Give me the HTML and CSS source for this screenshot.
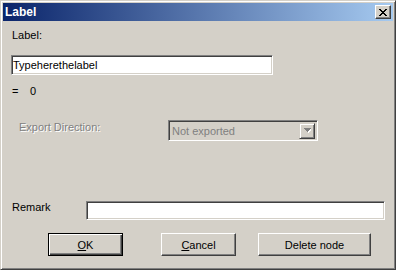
FILE: index.html
```html
<!DOCTYPE html>
<html lang="en">
<head>
    <meta charset="UTF-8">
    <title>Label</title>
    <link rel="stylesheet" href="styles.css">
</head>
<body>

    <div class="window">
        <!-- Title bar -->
        <div class="titlebar">
            <span class="title">Label</span>
            <span class="close-btn">
                <svg width="8" height="7" viewBox="0 0 8 7" shape-rendering="crispEdges">
                    <path fill="#000" d="M0 0h2v1h-2z M6 0h2v1h-2z M1 1h2v1h-2z M5 1h2v1h-2z M2 2h4v1h-4z M3 3h2v1h-2z M2 4h4v1h-4z M1 5h2v1h-2z M5 5h2v1h-2z M0 6h2v1h-2z M6 6h2v1h-2z"/>
                </svg>
            </span>
        </div>

        <div class="content">
            <div class="field-label">Label:</div>
            <input class="text-box label-box" type="text" value="Typeherethelabel">

            <div class="value-row">
                <span class="eq">=</span>
                <span>0</span>
            </div>

            <div class="export-row">
                <span class="disabled-text">Export Direction:</span>
                <div class="combo">
                    <span class="combo-text">Not exported</span>
                    <span class="combo-btn">
                        <svg width="7" height="5" viewBox="0 0 7 5" shape-rendering="crispEdges">
                            <path fill="#fff" d="M1 1h7v1h-1v1h-1v1h-1v1h-1v-1h-1v-1h-1v-1h-1z"/>
                            <path fill="#808080" d="M0 0h7v1h-1v1h-1v1h-1v1h-1v-1h-1v-1h-1v-1h-1z"/>
                        </svg>
                    </span>
                </div>
            </div>

            <div class="remark-row">
                <span class="remark-label">Remark</span>
                <input class="text-box remark-box" type="text" value="">
            </div>

            <div class="buttons">
                <button class="btn btn-default"><u>O</u>K</button>
                <button class="btn btn-cancel"><u>C</u>ancel</button>
                <button class="btn btn-delete">Delete node</button>
            </div>
        </div>
    </div>

</body>
</html>
```

FILE: styles.css
```css
body {
    margin: 0;
    font-family: "Liberation Sans", Arial, sans-serif;
    font-size: 11px;
    color: #000;
    background: #d4d0c8;
}

/* Classic raised window frame */
.window {
    width: 396px;
    height: 270px;
    box-sizing: border-box;
    background: #d4d0c8;
    border: 1px solid;
    border-color: #d4d0c8 #404040 #404040 #d4d0c8;
    box-shadow: inset 1px 1px #fff, inset -1px -1px #808080;
    padding: 2px;
}

.titlebar {
    height: 18px;
    display: flex;
    align-items: center;
    justify-content: space-between;
    padding: 0 2px;
    background: linear-gradient(to right, #0a246a, #a6caf0);
}
.title {
    color: #fff;
    font-weight: bold;
    font-size: 12px;
    line-height: 18px;
}
.close-btn {
    width: 16px;
    height: 14px;
    box-sizing: border-box;
    display: flex;
    align-items: center;
    justify-content: center;
    background: #d4d0c8;
    border: 1px solid;
    border-color: #fff #404040 #404040 #fff;
    box-shadow: inset -1px -1px #808080;
}

.content {
    padding-left: 8px;
}

.field-label {
    margin-top: 8px;
    padding-left: 1px;
    line-height: 13px;
}

/* Sunken edit box */
.text-box {
    display: block;
    box-sizing: border-box;
    margin: 0;
    padding: 0 1px;
    font-family: "Liberation Sans", Arial, sans-serif;
    font-size: 11px;
    color: #000;
    background: #fff;
    border: 1px solid;
    border-color: #808080 #fff #fff #808080;
    box-shadow: inset 1px 1px #404040, inset -1px -1px #d4d0c8;
    outline: none;
}
.label-box {
    margin-top: 13px;
    width: 262px;
    height: 20px;
}

.value-row {
    margin-top: 10px;
    padding-left: 1px;
    line-height: 13px;
    display: flex;
}
.eq {
    width: 18px;
}

.export-row {
    margin-top: 22px;
    padding-left: 8px;
    display: flex;
    align-items: flex-start;
}
.disabled-text {
    width: 149px;
    padding-top: 1px;
    line-height: 13px;
    color: #808080;
    text-shadow: 1px 1px #fff;
}

.combo {
    width: 150px;
    height: 21px;
    box-sizing: border-box;
    display: flex;
    align-items: center;
    justify-content: space-between;
    padding: 0 2px 0 3px;
    border: 1px solid;
    border-color: #808080 #fff #fff #808080;
    box-shadow: inset 1px 1px #404040, inset -1px -1px #d4d0c8;
}
.combo-text {
    color: #808080;
}
.combo-btn {
    width: 16px;
    height: 16px;
    box-sizing: border-box;
    display: flex;
    align-items: center;
    justify-content: center;
    border: 1px solid;
    border-color: #d4d0c8 #404040 #404040 #d4d0c8;
    box-shadow: inset 1px 1px #fff, inset -1px -1px #808080;
}

.remark-row {
    margin-top: 59px;
    display: flex;
    align-items: flex-start;
}
.remark-label {
    width: 74px;
    padding-left: 1px;
    padding-top: 1px;
    line-height: 13px;
}
.remark-box {
    margin-top: 1px;
    width: 299px;
    height: 19px;
}

.buttons {
    margin-top: 13px;
    padding-left: 37px;
    display: flex;
}
.btn {
    height: 23px;
    width: 75px;
    box-sizing: border-box;
    margin: 0;
    padding: 0;
    font-family: "Liberation Sans", Arial, sans-serif;
    font-size: 11px;
    color: #000;
    background: #d4d0c8;
    border: 1px solid;
    border-color: #fff #404040 #404040 #fff;
    box-shadow: inset -1px -1px #808080;
}
.btn u {
    text-decoration: underline;
}
.btn-default {
    border-color: #000;
    box-shadow: inset 1px 1px #fff, inset -1px -1px #404040, inset -2px -2px #808080;
}
.btn-cancel {
    margin-left: 38px;
}
.btn-delete {
    margin-left: 22px;
    width: 113px;
}
```
